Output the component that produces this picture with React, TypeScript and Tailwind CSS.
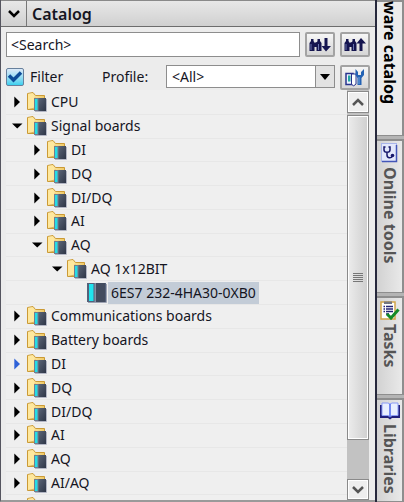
import React from "react";

const font = "font-['Noto_Sans','Open_Sans',sans-serif]";

type Item = { label: string; level: 0 | 1 | 2 | 3; state: "open" | "closed" | "leaf"; blue?: boolean };

const items: Item[] = [
  { label: "CPU", level: 0, state: "closed" },
  { label: "Signal boards", level: 0, state: "open" },
  { label: "DI", level: 1, state: "closed" },
  { label: "DQ", level: 1, state: "closed" },
  { label: "DI/DQ", level: 1, state: "closed" },
  { label: "AI", level: 1, state: "closed" },
  { label: "AQ", level: 1, state: "open" },
  { label: "AQ 1x12BIT", level: 2, state: "open" },
  { label: "6ES7 232-4HA30-0XB0", level: 3, state: "leaf" },
  { label: "Communications boards", level: 0, state: "closed" },
  { label: "Battery boards", level: 0, state: "closed" },
  { label: "DI", level: 0, state: "closed", blue: true },
  { label: "DQ", level: 0, state: "closed" },
  { label: "DI/DQ", level: 0, state: "closed" },
  { label: "AI", level: 0, state: "closed" },
  { label: "AQ", level: 0, state: "closed" },
  { label: "AI/AQ", level: 0, state: "closed" },
  { label: "Communications modules", level: 0, state: "closed" },
];

const indent = { 0: "pl-2", 1: "pl-7", 2: "pl-12", 3: "pl-17" };

function FolderIcon() {
  return (
    <svg width="20" height="20" viewBox="0 0 20 20" aria-hidden="true">
      <defs>
        <linearGradient id="folder" x1="0" x2="1">
          <stop offset="0" stopColor="#fff0b8" />
          <stop offset="1" stopColor="#efc965" />
        </linearGradient>
        <linearGradient id="module" x1="0" x2="1" y2="1">
          <stop offset="0" stopColor="#5b6577" />
          <stop offset="1" stopColor="#2e3647" />
        </linearGradient>
      </defs>
      <path d="M.5 17.500V1.500L6 .5 8.500 3.500H17.500V17.500Z" fill="url(#folder)" stroke="#cb9a35" />
      <path d="M1 2L5.500 1.500 8 5.500V15L1 17Z" fill="#ffe89e" />
      <path d="M8 5.500V16L1 17.500" fill="none" stroke="#c79a3c" strokeWidth="0.700" />
      <rect x="7" y="6" width="12" height="13" fill="#747d8e" />
      <rect x="8" y="7" width="2.500" height="11" fill="#25dce6" />
      <rect x="11.500" y="6" width="7.500" height="13" fill="url(#module)" />
      <path d="M19.500 7V19.500H8" fill="none" stroke="#b3b6c4" />
    </svg>
  );
}

function ModuleIcon() {
  return (
    <svg width="20" height="20" viewBox="0 0 20 20" aria-hidden="true">
      <rect x="0" y="0" width="19" height="19" fill="#55617a" />
      <rect x="2" y="1" width="4.500" height="17" fill="#20e4ee" />
      <rect x="7.500" y="0" width="1.500" height="19" fill="#8490a4" />
      <rect x="9" y="0" width="9" height="19" fill="#434c5f" />
      <path d="M19.500 1V19.500H1" fill="none" stroke="#9da2b2" />
    </svg>
  );
}

function Row({ item }: { item: Item }) {
  return (
    <li className={`flex min-h-0 flex-1 items-center border-b border-[#e7e7e7] ${indent[item.level]}`}>
      {item.state !== "leaf" && (
        <button
          aria-label={`${item.state === "open" ? "Collapse" : "Expand"} ${item.label}`}
          className={`flex w-3 shrink-0 items-center ${item.blue ? "text-[#2f62d8]" : "text-black"}`}
        >
          <svg width="10" height="10" viewBox="0 0 10 10" fill="currentColor" className="overflow-visible" aria-hidden="true">
            {item.state === "open" ? <path d="M-2 2.500H8.500L3.200 7.500Z" /> : <path d="M.3 -.5L6 5 .3 10.500Z" />}
          </svg>
        </button>
      )}
      {item.state === "leaf" && <span className="w-3 shrink-0" />}
      <span className="flex w-[22px] shrink-0 pl-px">{item.state === "leaf" ? <ModuleIcon /> : <FolderIcon />}</span>
      <span className={`px-[3px] leading-[22px] whitespace-nowrap ${item.state === "leaf" ? "bg-[#c3ccd7]" : ""}`}>{item.label}</span>
    </li>
  );
}

const toolButton =
  "flex w-[30px] shrink-0 items-center justify-center rounded-[2px] border-2 border-[#a3a3a3] bg-linear-to-b from-[#f6f6f6] to-[#d6d6d6]";

function Binoculars({ up }: { up?: boolean }) {
  return (
    <svg width="22" height="14" viewBox="0 0 22 14" className="shrink-0" aria-hidden="true">
      <g fill="#15154f">
        <path d="M2 1H4.500V3L5.500 4.500V13H.5V5L2 3Z" />
        <path d="M5 5L8 4V9H5Z" />
        <path d="M8.500 1H11V3L12.500 5V13H7.500V5L8.500 3Z" />
        {up ? <path d="M17 0L22 5.500H18.500V13H15.500V5.500H12.500Z" /> : <path d="M15.500 0H18.500V8H22L17 13.500 12.500 8H15.500Z" />}
      </g>
      <path d="M2 6V12M9.500 6V12" stroke="#6a74ad" />
    </svg>
  );
}

function DiagnosticsIcon() {
  return (
    <svg width="17" height="20" viewBox="0 0 17 20" fill="none" aria-hidden="true">
      <rect x=".5" y=".5" width="15" height="18" fill="#e3e8fb" stroke="#a9b5ea" />
      <path d="M1 18.500H15.500V2" stroke="#4356b8" strokeWidth="1.500" />
      <path d="M4.500 4H3V7C3 10 9 10 9 7V4H7.500M6 9.500V12C6 15.500 11 15.500 11 13" stroke="#17176b" strokeWidth="1.500" />
      <circle cx="11.500" cy="12.500" r="1.800" fill="#17176b" />
    </svg>
  );
}

function TasksIcon() {
  return (
    <svg width="20" height="20" viewBox="0 0 20 20" fill="none" aria-hidden="true">
      <rect x="1" y="2" width="14" height="17" fill="#fff" stroke="#d2a548" strokeWidth="1.500" />
      <path d="M4 1.500H12V4H4Z" fill="#747782" />
      <path d="M6 6.500H13M6 9H13M6 11.500H13M6 14H9" stroke="#252575" strokeWidth="1.300" />
      <path d="M3.500 6.500H5M3.500 9H5M3.500 11.500H5" stroke="#252575" strokeWidth="1.300" />
      <path d="M7 14L11 18 18.500 9.500" stroke="#148a27" strokeWidth="3" />
    </svg>
  );
}

function BookIcon() {
  return (
    <svg width="20" height="18" viewBox="0 0 20 18" aria-hidden="true">
      <path d="M0 3H20V16H12L10 17.500 8 16H0Z" fill="#20207c" />
      <path d="M2 1H8L10 2 12 1H18V13.500H12L10 15 8 13.500H2Z" fill="#e8efff" stroke="#8b9cf5" />
      <path d="M10 2V15" stroke="#4e68ee" strokeWidth="1.500" />
    </svg>
  );
}

function Tab({ label, title, icon, active, className }: { label: string; title?: string; icon?: React.ReactNode; active?: boolean; className: string }) {
  return (
    <button
      aria-label={title}
      className={`flex w-full flex-col items-center gap-1 border-t-2 border-r-2 border-b border-[#8e8e8e] ${active ? "bg-[#ececec]" : "bg-linear-to-r from-[#d2d2d2] to-[#e9e9e9]"} ${className}`}
    >
      {icon}
      <span className={`text-[16px] leading-5 font-bold whitespace-nowrap [writing-mode:vertical-rl] ${active ? "text-black" : "text-[#555]"}`}>{label}</span>
    </button>
  );
}

export default function App() {
  return (
    <div className={`flex h-screen overflow-hidden bg-[#ececec] text-[14px] text-[#15151f] ${font}`}>
      <main className="flex min-w-0 flex-1 flex-col border-b-2 border-l border-b-[#9a9a9a] border-l-[#55555f]">
        <header className="flex h-[27px] shrink-0 items-stretch border-t border-b border-t-[#8a8a8a] border-b-[#6d6d6d] bg-linear-to-b from-[#e8e8e8] to-[#d0d0d0]">
          <button aria-label="Collapse catalog" className="flex w-[26px] items-center justify-center border-r border-[#777]">
            <svg width="12" height="8" viewBox="0 0 12 8" fill="none" stroke="#000" strokeWidth="2.500" aria-hidden="true">
              <path d="M1 1L6 6 11 1" />
            </svg>
          </button>
          <h1 className="pl-[5px] text-[16px] leading-[26px] font-semibold">Catalog</h1>
        </header>
        <div className="flex flex-col gap-2 px-[5px] pt-[5px]">
          <div className="flex h-[25px] gap-[5px]">
            <input aria-label="Search" defaultValue="<Search>" className="min-w-0 flex-1 border border-[#8d8d8d] bg-white px-1" />
            <button aria-label="Find next" className={toolButton}><Binoculars /></button>
            <button aria-label="Find previous" className={toolButton}><Binoculars up /></button>
          </div>
          <div className="flex h-[25px] gap-[5px]">
            <label className="flex h-[23px] w-[91px] items-center gap-1.5">
              <span className="relative flex size-[18px]">
                <input type="checkbox" defaultChecked className="size-full appearance-none rounded-[2px] border border-[#67809c] bg-linear-to-b from-[#dbe9f8] to-[#35d0ef]" />
                <svg className="pointer-events-none absolute inset-0" width="18" height="18" viewBox="0 0 18 18" fill="none" stroke="#0d4c98" strokeWidth="3.500" aria-hidden="true"><path d="M3 7.500L7.500 12 15 4.500" /></svg>
              </span>
              Filter
            </label>
            <label htmlFor="profile" className="flex h-[23px] w-[59px] items-center">Profile:</label>
            <span className="relative flex h-[23px] min-w-0 flex-1">
              <select id="profile" className="w-full appearance-none border border-[#8d8d8d] bg-white px-[5px]"><option>&lt;All&gt;</option></select>
              <span className="pointer-events-none absolute inset-y-px right-px flex w-[19px] items-center justify-center border-l border-[#8d8d8d] bg-[#e2e2e2]">
                <svg width="10" height="6" viewBox="0 0 10 6" aria-hidden="true"><path d="M0 0H10L5 6Z" /></svg>
              </span>
            </span>
            <button aria-label="Manage profiles" className={toolButton}>
              <svg width="20" height="18" viewBox="0 0 20 18" className="shrink-0" aria-hidden="true">
                <path d="M1 4.500H8V15.500H1Z" fill="#eef4ff" stroke="#28348e" strokeWidth="1.500" />
                <rect x="3" y="6.500" width="2.500" height="6" fill="#22a7a4" />
                <path d="M6.500 5H11V15L8.500 17 6.500 15Z" fill="#fff" stroke="#28348e" />
                <path d="M10.500 0L13 3V6H16V3L19 0V6L16.500 9V16H12.500V9L10.500 6Z" fill="#2463b4" />
                <path d="M14 8V15" stroke="#73a6df" />
              </svg>
            </button>
          </div>
        </div>
        <div className="flex min-h-0 flex-1 overflow-hidden pr-1.5 pl-[5px]">
          <ul className="flex h-[429px] min-w-0 flex-1 flex-col bg-[#efefef] pt-px">
            {items.map((item, i) => <Row key={i} item={item} />)}
          </ul>
          <div className="flex w-[22px] shrink-0 flex-col bg-[#c2c2c2]">
            <button aria-label="Scroll up" className="mt-px flex h-[22px] items-center justify-center border border-[#8a8a8a] bg-[#eee] ring-1 ring-white ring-inset">
              <svg width="12" height="8" viewBox="0 0 12 8" fill="none" stroke="#555" strokeWidth="2.500" aria-hidden="true"><path d="M1 7L6 2 11 7" /></svg>
            </button>
            <div className="mt-0.5 flex h-[325px] flex-col items-center justify-center gap-px border border-[#8a8a8a] bg-linear-to-r from-[#ececec] to-[#cfcfcf] ring-1 ring-white ring-inset">
              {[0, 1, 2, 3, 4].map((n) => <span key={n} className="h-px w-2.5 bg-[#777]" />)}
            </div>
            <button aria-label="Scroll down" className="mt-auto flex h-[21px] items-center justify-center border border-[#8a8a8a] bg-[#eee] ring-1 ring-white ring-inset">
              <svg width="12" height="8" viewBox="0 0 12 8" fill="none" stroke="#555" strokeWidth="2.500" aria-hidden="true"><path d="M1 1L6 6 11 1" /></svg>
            </button>
          </div>
        </div>
      </main>
      <nav aria-label="Task cards" className="flex w-[29px] shrink-0 flex-col gap-[3px] border-l-2 border-[#26283c] bg-[#b4b4b4]">
        <Tab label="ware catalog" title="Hardware catalog" active className="h-[136px] shrink-0 justify-end border-t-0 pb-[31px]" />
        <Tab label="Online tools" className="h-[154px] shrink-0 pt-0.5" icon={<DiagnosticsIcon />} />
        <Tab label="Tasks" className="h-[99px] shrink-0 pt-0.5" icon={<TasksIcon />} />
        <Tab label="Libraries" className="flex-1 pt-0.5" icon={<BookIcon />} />
      </nav>
    </div>
  );
}
